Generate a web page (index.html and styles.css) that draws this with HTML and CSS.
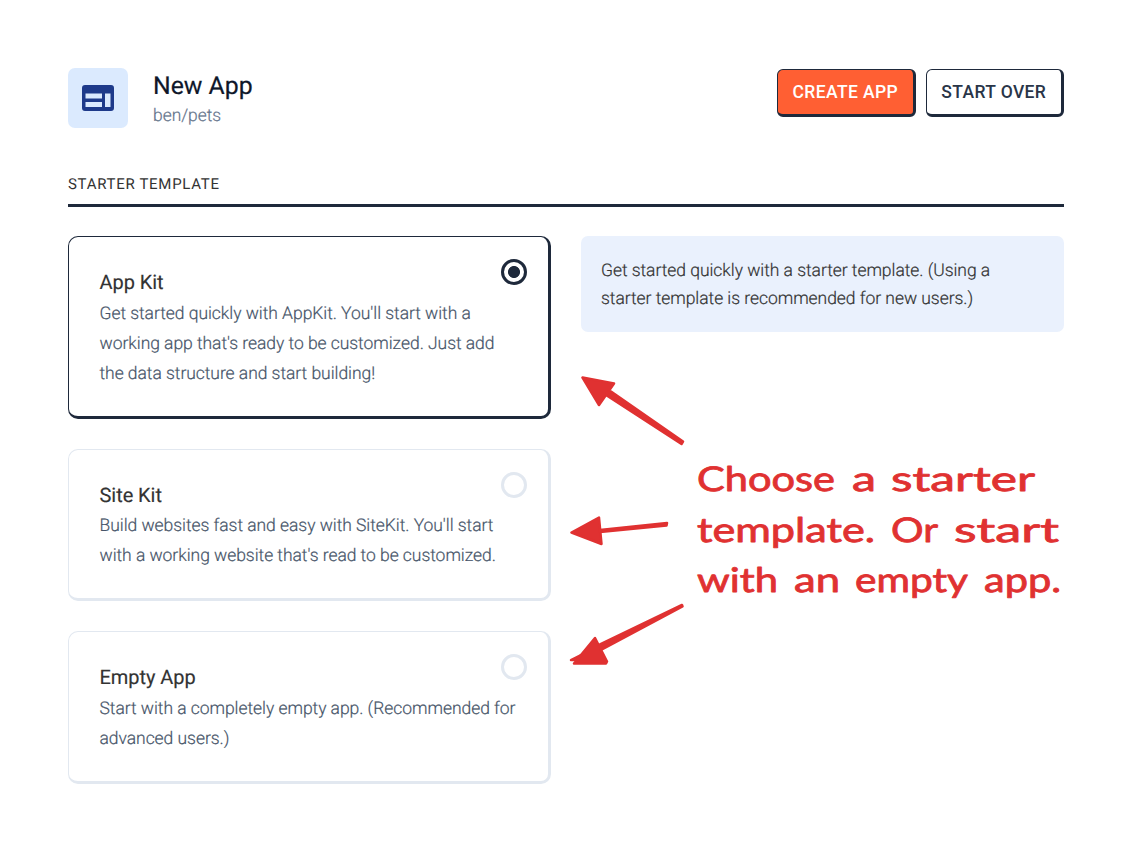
FILE: index.html
```html
<!DOCTYPE html>
<html lang="en">
<head>
<meta charset="utf-8">
<title>New App</title>
<link rel="stylesheet" href="styles.css">
</head>
<body>
<main class="page">
  <header class="header">
    <div class="app-icon">
      <svg width="32" height="26" viewBox="0 0 32 26"><path fill="#1e3a8a" fill-rule="evenodd" d="M3 0h26a3 3 0 0 1 3 3v20a3 3 0 0 1-3 3H3a3 3 0 0 1-3-3V3a3 3 0 0 1 3-3ZM3.500 8.500v5h16.500v-5ZM3.500 17v5h16.500v-5ZM23 8.500v13.500h5.500V8.500Z"/></svg>
    </div>
    <div class="heading">
      <h1 class="title">New App</h1>
      <div class="subtitle">ben/pets</div>
    </div>
    <div class="actions">
      <button class="button button-primary">CREATE APP</button>
      <button class="button">START OVER</button>
    </div>
  </header>
  <h2 class="section-title">STARTER TEMPLATE</h2>
  <div class="columns">
    <div class="options">
      <section class="card card-selected">
        <h3 class="card-title">App Kit</h3>
        <p class="card-text">Get started quickly with AppKit. You'll start with a<br>working app that's ready to be customized. Just add<br>the data structure and start building!</p>
        <span class="radio radio-on"></span>
      </section>
      <section class="card">
        <h3 class="card-title">Site Kit</h3>
        <p class="card-text">Build websites fast and easy with SiteKit. You'll start<br>with a working website that's read to be customized.</p>
        <span class="radio"></span>
      </section>
      <section class="card">
        <h3 class="card-title">Empty App</h3>
        <p class="card-text">Start with a completely empty app. (Recommended for<br>advanced users.)</p>
        <span class="radio"></span>
      </section>
    </div>
    <aside class="hint">Get started quickly with a starter template. (Using a<br>starter template is recommended for new users.)</aside>
  </div>
</main>
<svg class="annotation" width="1132" height="860" viewBox="0 0 1132 860">
  <g class="arrows">
    <path d="M582.500 377.500 614 383.500 599 405ZM571.500 532.500 599 517.500 601.500 544ZM574 663.500 595 638 607 661.500 606 663.500Z"/>
    <path d="M607 393 611 391.500 683 441.500 681.500 444 606 395ZM600 530 667 523 666.500 525.500 600 532ZM600 644.500 682 605 682.500 606.500 601 650ZM571 660 581 655 578 660Z"/>
  </g>
  <g class="note">
    <text x="697" y="491" textLength="138" lengthAdjust="spacingAndGlyphs">Choose</text>
    <text x="852" y="491" textLength="24" lengthAdjust="spacingAndGlyphs">a</text>
    <text x="891" y="491" textLength="144" lengthAdjust="spacingAndGlyphs">starter</text>
    <text x="697" y="541.500" textLength="178" lengthAdjust="spacingAndGlyphs">template.</text>
    <text x="891" y="541.500" textLength="47" lengthAdjust="spacingAndGlyphs">Or</text>
    <text x="954" y="541.500" textLength="105" lengthAdjust="spacingAndGlyphs">start</text>
    <text x="697" y="592" textLength="81" lengthAdjust="spacingAndGlyphs">with</text>
    <text x="794" y="592" textLength="46" lengthAdjust="spacingAndGlyphs">an</text>
    <text x="855" y="592" textLength="113" lengthAdjust="spacingAndGlyphs">empty</text>
    <text x="984" y="592" textLength="77" lengthAdjust="spacingAndGlyphs">app.</text>
  </g>
</svg>
</body>
</html>
```
FILE: styles.css
```css
* { box-sizing: border-box; }
body { margin: 0; background: #fff; font-family: Roboto, sans-serif; color: #333; width: 1132px; height: 860px; overflow: hidden; text-rendering: geometricPrecision; }
.page { padding: 68px 68px 0; }
.header { display: flex; height: 60px; }
.app-icon { width: 60px; height: 60px; border-radius: 7px; background: #dbeafe; display: flex; align-items: center; justify-content: center; }
.heading { margin-left: 25px; flex: 1; }
.title { margin: 3px 0 0; font-size: 24.800px; line-height: 32px; font-weight: 400; color: #0f172a; white-space: nowrap; -webkit-text-stroke: .2px; }
.subtitle { margin-top: -1px; font-size: 17.400px; line-height: 28px; font-weight: 300; color: #64748b; -webkit-text-stroke: .2px; }
.actions { display: flex; gap: 10px; margin-top: .5px; }
.button { width: 138.500px; height: 48.500px; padding: 0; border: 1.500px solid #1e293b; border-right-width: 3px; border-bottom-width: 3px; border-radius: 6px; background: #fff; color: #293548; font: 500 17.500px/24px Roboto, sans-serif; letter-spacing: .38px; white-space: nowrap; }
.button-primary { background: #ff5f33; color: #fff; }
.section-title { margin: 40px 0 0; height: 39px; padding-top: 5px; border-bottom: 3px solid #1e293b; font-size: 15px; line-height: 22px; font-weight: 400; letter-spacing: .7px; }
.columns { display: flex; align-items: flex-start; gap: 30px; margin-top: 29px; }
.options { display: flex; flex-direction: column; gap: 30px; width: 483px; }
.card { position: relative; height: 152.500px; padding: 30px 0 0 30.500px; border: 1.500px solid #e2e8f0; border-right-width: 3px; border-bottom-width: 3px; border-radius: 10px; white-space: nowrap; }
.card-selected { height: 182.500px; border-color: #1e293b; }
.card-title { margin: 0; font-size: 20px; line-height: 30px; font-weight: 400; color: #333; letter-spacing: -.05px; -webkit-text-stroke: .15px; }
.card-text { margin: 1.500px 0 0; font-size: 17.500px; line-height: 30px; font-weight: 300; color: #475569; letter-spacing: -.05px; -webkit-text-stroke: .2px; }
.radio { position: absolute; top: 22px; right: 21px; width: 26px; height: 26px; border: 3px solid #e2e8f0; border-radius: 50%; }
.radio-on { border-color: #1e293b; background: radial-gradient(circle, #1e293b 5.600px, #fff 6.400px); }
.hint { flex: 1; height: 96px; padding: 20.500px 20px 0; border-radius: 7px; background: #eaf1fd; font-size: 17.500px; line-height: 28.500px; font-weight: 300; letter-spacing: -.05px; -webkit-text-stroke: .2px; white-space: nowrap; }
.annotation { position: absolute; left: 0; top: 0; pointer-events: none; }
.arrows { fill: #e03131; stroke: #e03131; stroke-width: 2.500px; stroke-linejoin: round; }
.note { fill: #e03131; stroke: #e03131; stroke-width: .8px; stroke-linejoin: round; font-family: Excalifont, Virgil, Lato, sans-serif; font-size: 34px; font-weight: 400; }
```
